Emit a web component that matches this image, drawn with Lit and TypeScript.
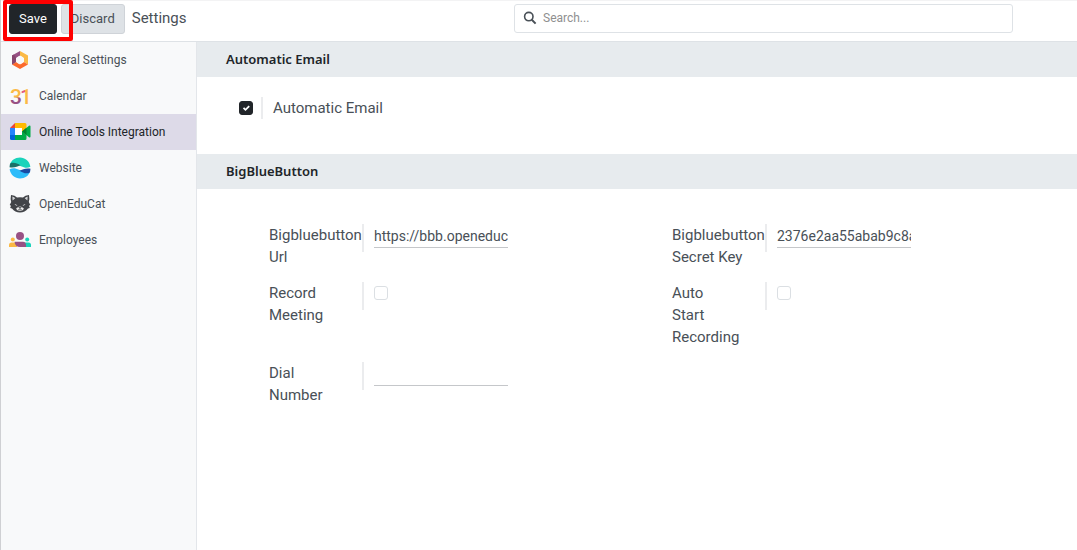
import { LitElement, html, css, svg, nothing } from "lit";
import { customElement } from "lit/decorators.js";
import { classMap } from "lit/directives/class-map.js";

const icon = (body: unknown) => html`<svg class="icon" viewBox="0 0 22 22" aria-hidden="true">${body}</svg>`;

const icons = {
  general: icon(svg`
    <path d="M11 2 3 6.500v9L7 13V9l4-2.500Z" fill="#985184"/>
    <path d="M11 2l8 4.500v9L15 13V9l-4-2.500Z" fill="#fbb945"/>
    <path d="M3 15.500 7 13l4 2.500L15 13l4 2.500L11 20Z" fill="#fc6a2c"/>
    <path d="M3 6.500 5 5.400 7 9v4l-4 2.500Z" fill="#87466f"/>
    <circle cx="11" cy="11" r="3.800" fill="#f8f9fa"/>`),
  calendar: icon(svg`
    <defs>
      <linearGradient id="three" x1="0" y1="0" x2="0" y2="1">
        <stop offset="0.500" stop-color="#fbb945"/><stop offset="0.560" stop-color="#985184"/>
      </linearGradient>
      <linearGradient id="one" x1="0" y1="0" x2="1" y2="0">
        <stop offset="0.380" stop-color="#e2587d"/><stop offset="0.420" stop-color="#fbb945"/>
      </linearGradient>
    </defs>
    <text class="digit" x="1" y="19" fill="url(#three)">3</text>
    <text class="digit" x="11" y="19" fill="url(#one)">1</text>`),
  meet: icon(svg`
    <path d="M6 2v5H1Z" fill="#ea4335"/>
    <path d="M1 7h5v7H1Z" fill="#2684fc"/>
    <path d="M1 14h5v5H2.500A1.500 1.500 0 0 1 1 17.500Z" fill="#0066da"/>
    <path d="M6 2h10a1.500 1.500 0 0 1 1.500 1.500V7.500L13 11V7H6Z" fill="#ffba00"/>
    <path d="M6 14h7v-3.500l4.500 3.500v3.500A1.500 1.500 0 0 1 16 19H6Z" fill="#00ac47"/>
    <path d="M13 10.500 20 4.700q1.500-.8 1.500.8v10q0 1.600-1.500.8Z" fill="#00ac47"/>
    <path d="M13 10.500l4.500-3.700v7.400Z" fill="#00832d"/>
    <path d="M6 7h7v7H6Z" fill="#fff"/>`),
  website: icon(svg`
    <path d="M.8 8C2 3.400 6 .5 11 .5s9.500 3.500 10.400 9.200c-3.500 1.800-6 1-9.400-.5C8.500 7.500 4.500 6.500.8 8Z" fill="#1ad3bb"/>
    <path d="M.8 8C1 6.500 2 6 2 6c3.500-1 6.500.500 9.500 2.300C8.500 9.800 4.500 11.300.500 10.300Z" fill="#1a6f66"/>
    <path d="M21.200 14C20 18.600 16 21.500 11 21.500S1.500 18 .6 12.300c3.500-1.800 6-1 9.400.5 3.500 1.700 7.500 2.700 11.200 1.200Z" fill="#2ebcfa"/>
    <path d="M21.200 14c-.2 1.500-1.200 2-1.200 2-3.500 1-6.500-.5-9.500-2.300 3-1.500 7-3 11-2Z" fill="#1a4ba3"/>`),
  cat: icon(svg`
    <path d="M2 2q4 .2 6 2.500 3-.7 6 0Q16 2.200 20 2q.8 4-.2 7l1.500 3-1.300.7.800 2.300-1.800.4Q16 19.500 11 19.500T3 15.400L1.200 15 2 12.700.7 12l1.500-3q-1-3-.2-7Z" fill="#424448"/>
    <path d="M3.300 3.600q2 .5 3 1.700L3.600 7.600Zm15.400 0q-2 .5-3 1.700l2.700 2.300Z" fill="#d0d1d3"/>
    <path d="M5.500 11l3 1.200q-2 .8-3-1.200Zm11 0-3 1.200q2 .8 3-1.200Z" fill="#fff"/>
    <path d="M8.500 14.500q2.500-2 5 0l1.500 1.300q-1.500 2.200-4 2.200T7 15.800Z" fill="#ececec"/>
    <path d="M9.800 14.300h2.400L11 15.600Zm1.200 1.200v1.200m-2 0q1 .8 2 0 1 .8 2 0" fill="#424448" stroke="#424448" stroke-width=".6"/>`),
  employees: icon(svg`
    <circle cx="11" cy="7" r="4" fill="#985184"/>
    <circle cx="3.800" cy="10.500" r="2" fill="#fbb945"/>
    <circle cx="18.200" cy="10.500" r="2" fill="#1ad3bb"/>
    <path d="M0 18v-2q0-2.500 2.500-2.500H8V18Z" fill="#fbb945"/>
    <path d="M22 18v-2q0-2.500-2.500-2.500H14V18Z" fill="#1ad3bb"/>
    <path d="M5.500 12.800H14q3 .2 3 3.200v2h-6q-4.800 0-5.500-5.200Z" fill="#985184"/>`),
};

interface Field { id: string; label: string; kind: "text" | "check"; value?: string; }

const apps = [
  { name: "General Settings", icon: icons.general },
  { name: "Calendar", icon: icons.calendar },
  { name: "Online Tools Integration", icon: icons.meet, active: true },
  { name: "Website", icon: icons.website },
  { name: "OpenEduCat", icon: icons.cat },
  { name: "Employees", icon: icons.employees },
];

const fields: Field[] = [
  { id: "url", label: "Bigbluebutton\nUrl", kind: "text", value: "https://bbb.openeduc" },
  { id: "secret", label: "Bigbluebutton\nSecret Key", kind: "text", value: "2376e2aa55abab9c8a" },
  { id: "record", label: "Record\nMeeting", kind: "check" },
  { id: "autostart", label: "Auto\nStart\nRecording", kind: "check" },
  { id: "dial", label: "Dial\nNumber", kind: "text", value: "" },
];

@customElement("app-root")
export class AppRoot extends LitElement {
  static styles = css`
    :host {
      display: flex; flex-direction: column; min-height: 100vh; box-sizing: border-box;
      position: relative; border-left: 1px solid #cfd0d3; background: #fff; color: #495057;
      font: 15px/22px Roboto, sans-serif;
    }
    *, *::before, *::after { box-sizing: border-box; }
    input, button { font: inherit; color: inherit; margin: 0; }
    header {
      display: grid; grid-template-columns: minmax(0, 1fr) minmax(0, 1fr); column-gap: 14px;
      height: 42px; padding: 3px 64px 0 0; border-top: 1px solid #f3f3f4; border-bottom: 1px solid #dee2e6;
    }
    .actions { display: flex; align-items: flex-start; gap: 4px; padding-left: 8px; }
    .btn {
      height: 30px; padding: 0 9px; border: 1px solid #cfd3d8; border-radius: 3px;
      background: #dee2e6; font-size: 13px; line-height: 20px;
    }
    .primary { background: #212529; border-color: #212529; color: #fff; }
    .title { margin: 0 0 0 3px; font-size: 15px; line-height: 28px; font-weight: 400; }
    .marker { position: absolute; left: 2px; top: 0; width: 70px; height: 41px; border: 4px solid #f00; border-radius: 2px; pointer-events: none; }
    .search { display: flex; align-items: center; gap: 6px; height: 29px; padding: 0 8px 2px; border: 1px solid #dee2e6; border-radius: 3px; }
    .glass { width: 14px; height: 14px; flex: none; }
    .search input { flex: 1; min-width: 0; border: 0; padding: 0; outline: 0; background: none; font-size: 12px; line-height: 16px; }
    .search input::placeholder { color: #8f8f8f; opacity: 1; }
    .body { display: flex; flex: 1; }
    nav { flex: none; width: 196px; background: #f8f9fa; border-right: 1px solid #e3e6ea; }
    .app { display: flex; align-items: center; gap: 8px; height: 36px; padding-left: 8px; font-size: 12px; line-height: 16px; color: #495057; text-decoration: none; }
    .active { background: #dddae8; color: #212529; }
    .icon { width: 22px; height: 22px; flex: none; overflow: visible; }
    .digit { font: 500 21px Roboto, sans-serif; }
    main { flex: 1; min-width: 0; }
    h2 { margin: 0; padding: 0 29px; background: #e7ebee; color: #212529; font: 600 13px/35px "Noto Sans", sans-serif; }
    .single { display: flex; align-items: center; height: 77px; padding: 0 42px 15px; }
    .single .rule { height: 22px; margin: 0 10px 0 8px; }
    .rule { width: 2px; background: #ebecee; }
    .check {
      appearance: none; width: 14px; height: 14px; border: 1px solid #dbdfe3; border-radius: 3px; background: #fff; display: block;
    }
    .box { display: grid; }
    .box > * { grid-area: 1 / 1; }
    .check:checked { background: #212529; border-color: #212529; }
    .tick { width: 14px; height: 14px; pointer-events: none; }
    .grid { display: grid; grid-template-columns: repeat(2, minmax(0, 1fr)); row-gap: 14px; padding: 35px 2px 0 72px; }
    .field { display: grid; grid-template-columns: 93px 2px 134px; align-items: start; }
    .field label { white-space: pre; }
    .field .rule { height: 28px; }
    .field .check { margin: 4px 0 0 10px; }
    .line { width: 134px; height: 24px; margin-left: 10px; padding: 1px 0 0; border: 0; border-bottom: 1px solid #c5c7ca; border-radius: 0; outline: 0; background: none; font-size: 14px; line-height: 22px; }
  `;

  private renderField(f: Field) {
    return html`<div class="field">
      <label for=${f.id}>${f.label}</label>
      <span class="rule"></span>
      ${f.kind === "text"
        ? html`<input class="line" id=${f.id} type="text" .value=${f.value ?? ""} />`
        : html`<input class="check" id=${f.id} type="checkbox" />`}
    </div>`;
  }

  render() {
    return html`
      <header>
        <div class="actions">
          <button class="btn primary" type="button">Save</button>
          <button class="btn" type="button">Discard</button>
          <h1 class="title">Settings</h1>
        </div>
        <label class="search">
          <svg class="glass" viewBox="0 0 14 14" fill="none" stroke="#495057" stroke-width="1.600" aria-hidden="true">
            <circle cx="5.800" cy="5.600" r="4.200" /><path d="M8.800 8.800 12.600 12.600" stroke-width="2" />
          </svg>
          <input type="text" placeholder="Search..." aria-label="Search" />
        </label>
      </header>
      <div class="body">
        <nav>
          ${apps.map((a) => html`<a href="#" class=${classMap({ app: true, active: !!a.active })}
            aria-current=${a.active ? "page" : nothing}>${a.icon}<span>${a.name}</span></a>`)}
        </nav>
        <main>
          <h2>Automatic Email</h2>
          <div class="single">
            <span class="box">
              <input class="check" id="auto-email" type="checkbox" checked />
              <svg class="tick" viewBox="0 0 14 14" fill="none" stroke="#fff" stroke-width="1.800" aria-hidden="true"><path d="M4.500 6.800 6.500 8.800 10.200 5.200" /></svg>
            </span>
            <span class="rule"></span>
            <label for="auto-email">Automatic Email</label>
          </div>
          <h2>BigBlueButton</h2>
          <div class="grid">${fields.map((f) => this.renderField(f))}</div>
        </main>
      </div>
      <div class="marker"></div>
    `;
  }
}
